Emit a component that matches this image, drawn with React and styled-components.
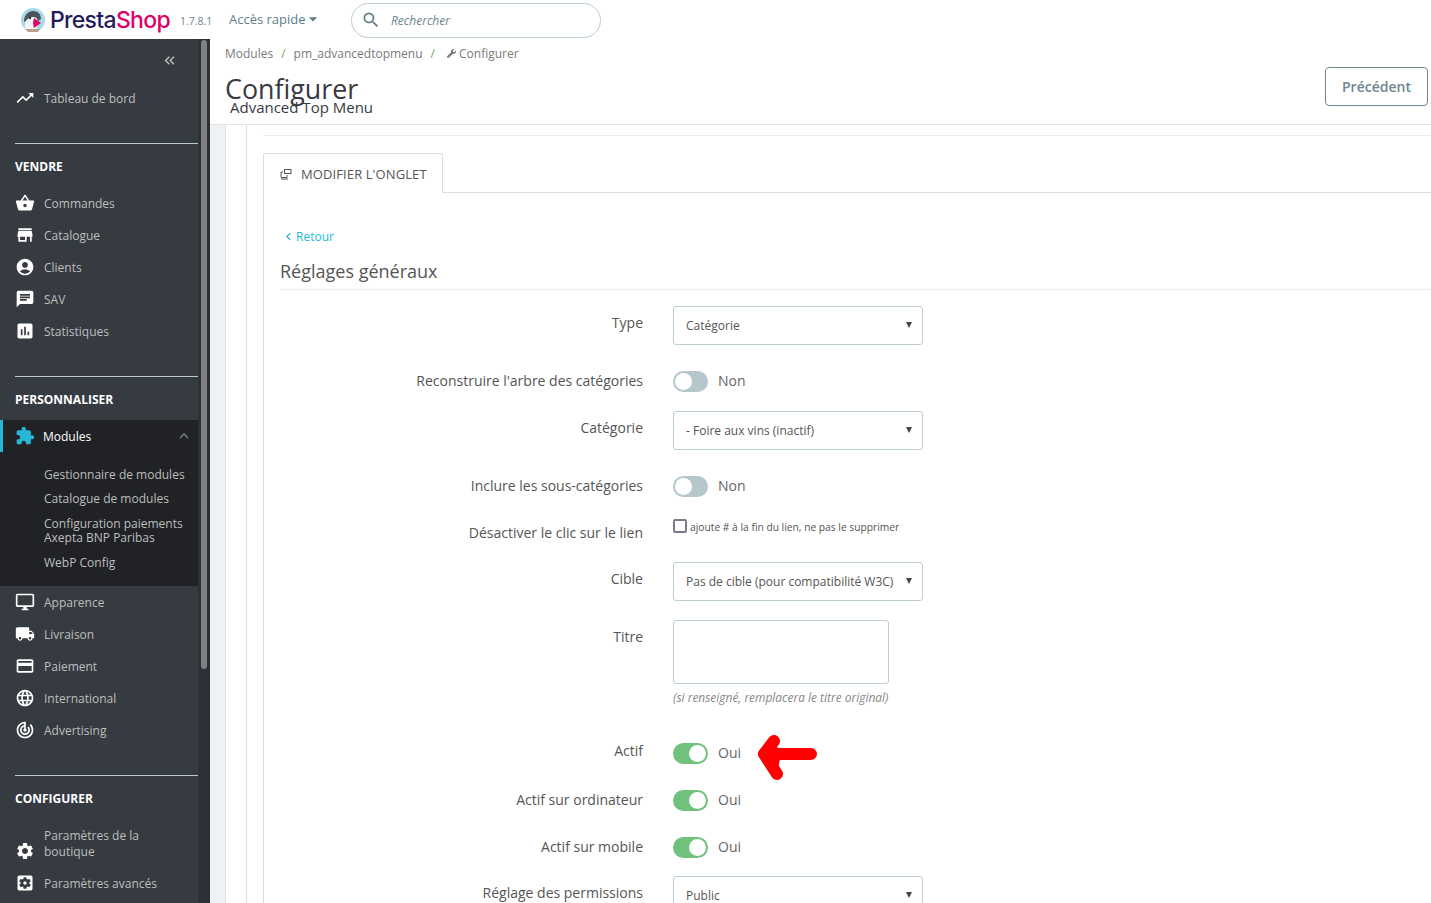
import React from "react";
import styled, { createGlobalStyle } from "styled-components";
import {
  MdTrendingUp,
  MdShoppingBasket,
  MdStore,
  MdAccountCircle,
  MdChat,
  MdAssessment,
  MdExtension,
  MdOutlineDesktopWindows,
  MdLocalShipping,
  MdCreditCard,
  MdLanguage,
  MdTrackChanges,
  MdSettings,
  MdSettingsApplications,
  MdExpandLess,
  MdSearch,
  MdArrowDropDown,
  MdChevronLeft,
  MdKeyboardDoubleArrowLeft,
} from "react-icons/md";
import { FaWrench } from "react-icons/fa";

const GlobalStyle = createGlobalStyle`
  html, body { margin: 0; padding: 0; height: 100%; overflow: hidden; background: #fff; }
  body { font-family: "Open Sans", "Liberation Sans", sans-serif; }
  * { box-sizing: border-box; }
`;

function Logo() {
  return (
    <svg width="26" height="26" viewBox="0 0 26 26">
      <circle cx="13" cy="13" r="12" fill="#a7d9e6" />
      <path d="M4 15C4 8 8 4 13 4s8 3 8 8l-3 2H6z" fill="#4a5560" />
      <path d="M5 21c-1-6 2-11 8-11 4 0 5 3 5 6 0 4-2 7-5 7H7z" fill="#f4f4f4" />
      <circle cx="10" cy="11" r="1.200" fill="#333" />
      <path d="M14 11l7 5-7 5-1-5z" fill="#df0067" />
      <path d="M5 22h15l-2 3H8z" fill="#b7a28c" />
    </svg>
  );
}

function TabIcon() {
  return (
    <svg width="12" height="12" viewBox="0 0 12 12" fill="none" stroke="#555" strokeWidth="1">
      <rect x="4.500" y="1.500" width="6.500" height="4" />
      <path d="M3 4H1v5M1 9.500h6V7" />
      <path d="M1 11h7" />
    </svg>
  );
}

function RedArrow() {
  return (
    <svg width="62" height="48" viewBox="0 0 62 48">
      <path d="M7 21L17 8l7 13-4 20z" fill="#ff0000" />
      <path
        d="M54 21H10M17 8L7 21l13 20"
        fill="none"
        stroke="#ff0000"
        strokeWidth="12"
        strokeLinecap="round"
        strokeLinejoin="round"
      />
    </svg>
  );
}

const Page = styled.div`
  display: flex;
  flex-direction: column;
  height: 100vh;
  overflow: hidden;
  position: relative;
`;

const TopBar = styled.header`
  display: flex;
  align-items: center;
  height: 39px;
  flex: none;
  padding-left: 20px;
`;

const LogoText = styled.span`
  margin-left: 4px;
  font-family: "Inter", sans-serif;
  font-size: 23px;
  font-weight: 500;
  letter-spacing: -0.7px;
  color: #251b5b;
  width: 130px;

  span {
    color: #df0067;
  }
`;

const Version = styled.span`
  font-size: 10.500px;
  color: #6c868e;
  width: 49px;
  padding-top: 3px;
`;

const QuickAccess = styled.span`
  display: flex;
  align-items: center;
  font-size: 13px;
  color: #607d85;
  width: 122px;
  padding-bottom: 2px;

  svg {
    margin-left: -3px;
  }
`;

const SearchBox = styled.div`
  display: flex;
  align-items: center;
  gap: 10px;
  width: 250px;
  height: 35px;
  margin-top: 1px;
  padding-left: 9px;
  border: 1px solid #bbcdd2;
  border-radius: 18px;
  font-size: 12px;
  font-style: italic;
  color: #6c868e;
`;

const Body = styled.div`
  display: flex;
  flex: 1;
  min-height: 0;
`;

const Sidebar = styled.aside`
  display: flex;
  width: 210px;
  flex: none;
  background: #2d3035;
`;

const Nav = styled.nav`
  width: 198px;
  background: #363a41;
  overflow: hidden;
  flex: none;
`;

const ScrollTrack = styled.div`
  flex: 1;
  padding: 1px 3px 0;
`;

const ScrollThumb = styled.div`
  height: 629px;
  border-radius: 3px;
  background: #7e8084;
`;

const Collapse = styled.div`
  display: flex;
  justify-content: flex-end;
  align-items: center;
  height: 43px;
  padding: 0 20px 1px 0;
  color: #bebebe;
`;

const NavRow = styled.div`
  display: flex;
  align-items: center;
  height: 32px;
  padding-left: 15px;
  font-size: 12px;
  color: #bebebe;
  position: relative;

  svg {
    flex: none;
    color: #fff;
  }

  span {
    margin-left: 9px;
  }
`;

const SectionTitle = styled.div`
  margin: 29px 0 0 15px;
  padding-top: 14px;
  height: 44px;
  border-top: 1px solid #bbcdd2;
  font-size: 12px;
  font-weight: 700;
  color: #fff;
`;

const ActiveRow = styled(NavRow)`
  background: #202226;
  border-left: 3px solid #25b9d7;
  padding-left: 12px;
  color: #fff;

  svg {
    color: #25b9d7;
  }

  span {
    margin-left: 8px;
  }
`;

const ExpandIcon = styled(MdExpandLess)`
  position: absolute;
  right: 5px;
  top: 7px;
  && {
    color: #6c868e;
  }
`;

const SubMenu = styled.div`
  background: #202226;
  padding: 11px 0 11px 44px;
`;

const SubItem = styled.div`
  font-size: 12px;
  line-height: 14px;
  color: #bebebe;
  padding: 5px 0;
  margin: ${(p) => (p.$wrapped ? "1px 0" : "0")};
`;

const TallRow = styled(NavRow)`
  height: 48px;
  padding-top: 2px;
  line-height: 16px;

  svg {
    align-self: flex-end;
    margin-bottom: 6px;
  }
`;

const Main = styled.main`
  flex: 1;
  min-width: 0;
  display: flex;
  flex-direction: column;
`;

const PageHead = styled.div`
  height: 86px;
  flex: none;
  padding: 6px 3px 0 15px;
  border-bottom: 1px solid #dfe3e5;
  position: relative;
`;

const Breadcrumb = styled.div`
  display: flex;
  align-items: center;
  font-size: 12px;
  color: #7a7a7a;
  height: 17px;

  i {
    font-style: normal;
    color: #7da85a;
    margin: 0 8px;
  }

  svg {
    margin: 0 3px 0 4px;
  }
`;

const HeadRow = styled.div`
  display: flex;
  justify-content: space-between;
  align-items: flex-start;
`;

const Titles = styled.div`
  padding-top: 10px;
`;

const PageTitle = styled.h1`
  margin: 0;
  font-size: 26.800px;
  font-weight: 400;
  line-height: 34px;
  color: #363a41;
`;

const SubTitle = styled.h2`
  margin: -9px 0 0 5px;
  font-size: 15px;
  font-weight: 400;
  line-height: 20px;
  color: #363a41;
`;

const BackButton = styled.button`
  width: 103px;
  height: 39px;
  margin-top: 5px;
  border: 1px solid #6c868e;
  border-radius: 4px;
  background: #fff;
  font-family: inherit;
  font-size: 14px;
  font-weight: 600;
  color: #6c868e;
`;

const Content = styled.div`
  flex: 1;
  min-height: 0;
  background: #eff1f2;
  padding-left: 15px;
  overflow: hidden;
`;

const OuterPanel = styled.div`
  height: 100%;
  background: #fff;
  border-left: 1px solid #dbe6e9;
  padding-left: 20px;
`;

const InnerPanel = styled.div`
  height: 100%;
  border-left: 1px solid #dcdcdc;
  padding: 10px 0 0 16px;
`;

const TopRule = styled.div`
  border-top: 1px solid #eee;
  margin-bottom: 17px;
`;

const TabStrip = styled.div`
  display: flex;
  height: 40px;
`;

const Tab = styled.div`
  display: flex;
  align-items: center;
  gap: 9px;
  width: 180px;
  padding-left: 16px;
  border: 1px solid #dcdcdc;
  border-bottom: none;
  border-radius: 3px 3px 0 0;
  font-size: 13px;
  letter-spacing: 0.1px;
  color: #555;
`;

const TabFill = styled.div`
  flex: 1;
  border-bottom: 1px solid #dcdcdc;
`;

const TabBody = styled.div`
  border-left: 1px solid #dcdcdc;
  padding: 33px 0 0 16px;
  height: 800px;
`;

const BackLink = styled.div`
  display: flex;
  align-items: center;
  height: 20px;
  font-size: 12px;
  color: #25b9d7;
  margin-left: 1px;
`;

const FormTitle = styled.h3`
  margin: 13px 0 16px;
  height: 31px;
  padding-bottom: 6px;
  border-bottom: 1px solid #eee;
  font-size: 18px;
  font-weight: 400;
  line-height: 24px;
  color: #555;
`;

const Row = styled.div`
  display: grid;
  grid-template-columns: 363px auto;
  column-gap: 30px;
  justify-content: start;
  align-items: ${(p) => (p.$center ? "center" : "start")};
  margin-top: ${(p) => p.$top || 0}px;
`;

const Label = styled.label`
  text-align: right;
  font-size: 14px;
  line-height: 20px;
  color: #555;
  padding-top: ${(p) => p.$pad || 0}px;
  margin-top: ${(p) => -(p.$lift || 0)}px;
`;

const Select = styled.div`
  display: flex;
  align-items: center;
  justify-content: space-between;
  width: 250px;
  height: 39px;
  padding: 0 10px 0 12px;
  border: 1px solid #bbcdd2;
  border-radius: 3px;
  font-size: 12px;
  color: #555;

  &::after {
    content: "";
    border-style: solid;
    border-width: 6px 3px 0;
    border-color: #444 transparent transparent;
    margin-bottom: 2px;
  }
`;

const SwitchLine = styled.div`
  display: flex;
  align-items: center;
  gap: 10px;
  height: 21px;
  font-size: 14px;
  line-height: 20px;
  color: #666;
`;

const SwitchState = styled.span`
  margin-top: -2px;
`;

const Switch = styled.span`
  display: flex;
  justify-content: ${(p) => (p.$on ? "flex-end" : "flex-start")};
  align-items: center;
  width: 35px;
  height: 21px;
  padding: 2px;
  border-radius: 11px;
  background: ${(p) => (p.$on ? "#70c17c" : "#b5c6cc")};

  &::before {
    content: "";
    width: 17px;
    height: 17px;
    border-radius: 50%;
    background: #fff;
  }
`;

const CheckLine = styled.div`
  display: flex;
  align-items: center;
  gap: 3px;
  font-size: 10.250px;
  line-height: 14px;
  color: #555;
`;

const Box = styled.span`
  width: 14px;
  height: 14px;
  margin-bottom: 2px;
  border: 2px solid #7d7a8c;
  border-radius: 2px;
`;

const TextArea = styled.div`
  width: 216px;
  height: 64px;
  border: 1px solid #bbcdd2;
  border-radius: 3px;
`;

const Help = styled.div`
  margin-top: 6px;
  font-size: 11.950px;
  line-height: 16px;
  font-style: italic;
  color: #888;
`;

const ArrowMark = styled.div`
  position: absolute;
  left: 757px;
  top: 733px;
  line-height: 0;
`;

const topItems = [
  [MdShoppingBasket, "Commandes"],
  [MdStore, "Catalogue"],
  [MdAccountCircle, "Clients"],
  [MdChat, "SAV"],
  [MdAssessment, "Statistiques"],
];

const lowerItems = [
  [MdOutlineDesktopWindows, "Apparence"],
  [MdLocalShipping, "Livraison"],
  [MdCreditCard, "Paiement"],
  [MdLanguage, "International"],
  [MdTrackChanges, "Advertising"],
];

export default function App() {
  return (
    <Page>
      <GlobalStyle />
      <TopBar>
        <Logo />
        <LogoText>
          Presta<span>Shop</span>
        </LogoText>
        <Version>1.7.8.1</Version>
        <QuickAccess>
          Accès rapide
          <MdArrowDropDown size={20} />
        </QuickAccess>
        <SearchBox>
          <MdSearch size={20} color="#607d85" />
          Rechercher
        </SearchBox>
      </TopBar>
      <Body>
        <Sidebar>
          <Nav>
            <Collapse>
              <MdKeyboardDoubleArrowLeft size={17} />
            </Collapse>
            <NavRow>
              <MdTrendingUp size={20} />
              <span>Tableau de bord</span>
            </NavRow>
            <SectionTitle>VENDRE</SectionTitle>
            {topItems.map(([Icon, label]) => (
              <NavRow key={label}>
                <Icon size={20} />
                <span>{label}</span>
              </NavRow>
            ))}
            <SectionTitle>PERSONNALISER</SectionTitle>
            <ActiveRow>
              <MdExtension size={20} />
              <span>Modules</span>
              <ExpandIcon size={18} />
            </ActiveRow>
            <SubMenu>
              <SubItem>Gestionnaire de modules</SubItem>
              <SubItem>Catalogue de modules</SubItem>
              <SubItem $wrapped>
                Configuration paiements
                <br />
                Axepta BNP Paribas
              </SubItem>
              <SubItem>WebP Config</SubItem>
            </SubMenu>
            {lowerItems.map(([Icon, label]) => (
              <NavRow key={label}>
                <Icon size={20} />
                <span>{label}</span>
              </NavRow>
            ))}
            <SectionTitle>CONFIGURER</SectionTitle>
            <TallRow>
              <MdSettings size={20} />
              <span>
                Paramètres de la
                <br />
                boutique
              </span>
            </TallRow>
            <NavRow>
              <MdSettingsApplications size={20} />
              <span>Paramètres avancés</span>
            </NavRow>
          </Nav>
          <ScrollTrack>
            <ScrollThumb />
          </ScrollTrack>
        </Sidebar>
        <Main>
          <PageHead>
            <Breadcrumb>
              Modules
              <i>/</i>
              pm_advancedtopmenu
              <i>/</i>
              <FaWrench size={9} />
              Configurer
            </Breadcrumb>
            <HeadRow>
              <Titles>
                <PageTitle>Configurer</PageTitle>
                <SubTitle>Advanced Top Menu</SubTitle>
              </Titles>
              <BackButton>Précédent</BackButton>
            </HeadRow>
          </PageHead>
          <Content>
            <OuterPanel>
              <InnerPanel>
                <TopRule />
                <TabStrip>
                  <Tab>
                    <TabIcon />
                    MODIFIER L'ONGLET
                  </Tab>
                  <TabFill />
                </TabStrip>
                <TabBody>
                  <BackLink>
                    <MdChevronLeft size={15} />
                    Retour
                  </BackLink>
                  <FormTitle>Réglages généraux</FormTitle>
                  <Row>
                    <Label $pad={7}>Type</Label>
                    <Select>Catégorie</Select>
                  </Row>
                  <Row $top={26} $center>
                    <Label $lift={2}>Reconstruire l'arbre des catégories</Label>
                    <SwitchLine>
                      <Switch />
                      <SwitchState>Non</SwitchState>
                    </SwitchLine>
                  </Row>
                  <Row $top={19}>
                    <Label $pad={7}>Catégorie</Label>
                    <Select>- Foire aux vins (inactif)</Select>
                  </Row>
                  <Row $top={26} $center>
                    <Label $lift={2}>Inclure les sous-catégories</Label>
                    <SwitchLine>
                      <Switch />
                      <SwitchState>Non</SwitchState>
                    </SwitchLine>
                  </Row>
                  <Row $top={22}>
                    <Label $pad={4}>Désactiver le clic sur le lien</Label>
                    <CheckLine>
                      <Box />
                      ajoute # à la fin du lien, ne pas le supprimer
                    </CheckLine>
                  </Row>
                  <Row $top={19}>
                    <Label $pad={7}>Cible</Label>
                    <Select>Pas de cible (pour compatibilité W3C)</Select>
                  </Row>
                  <Row $top={19}>
                    <Label $pad={7}>Titre</Label>
                    <div>
                      <TextArea />
                      <Help>(si renseigné, remplacera le titre original)</Help>
                    </div>
                  </Row>
                  <Row $top={37} $center>
                    <Label $lift={6}>Actif</Label>
                    <SwitchLine>
                      <Switch $on />
                      <SwitchState>Oui</SwitchState>
                    </SwitchLine>
                  </Row>
                  <Row $top={26} $center>
                    <Label $lift={2}>Actif sur ordinateur</Label>
                    <SwitchLine>
                      <Switch $on />
                      <SwitchState>Oui</SwitchState>
                    </SwitchLine>
                  </Row>
                  <Row $top={26} $center>
                    <Label $lift={2}>Actif sur mobile</Label>
                    <SwitchLine>
                      <Switch $on />
                      <SwitchState>Oui</SwitchState>
                    </SwitchLine>
                  </Row>
                  <Row $top={18}>
                    <Label $pad={7}>Réglage des permissions</Label>
                    <Select>Public</Select>
                  </Row>
                </TabBody>
              </InnerPanel>
            </OuterPanel>
          </Content>
        </Main>
      </Body>
      <ArrowMark>
        <RedArrow />
      </ArrowMark>
    </Page>
  );
}
